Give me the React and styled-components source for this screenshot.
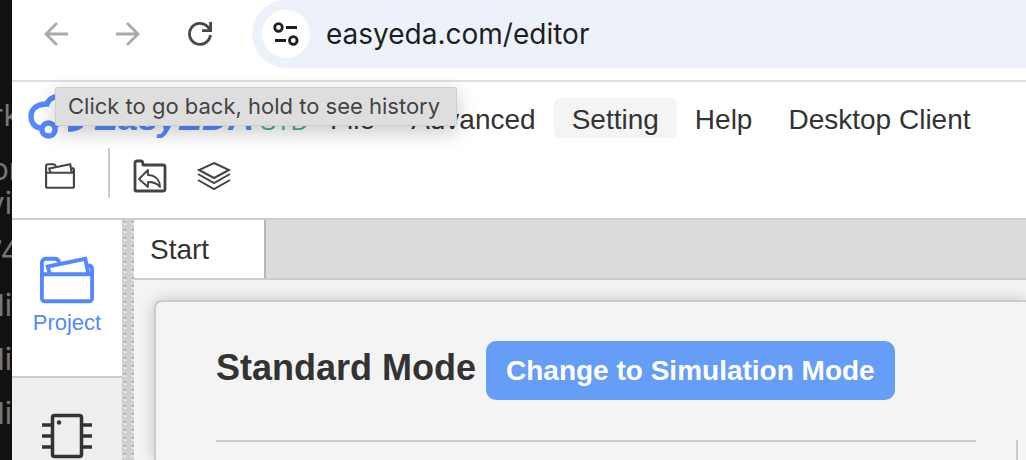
import styled, { createGlobalStyle } from "styled-components";

const menuItems = ["File", "Advanced", "Setting", "Help", "Desktop Client"];

const backdropLines = [
  { text: "rk", gap: 98, cut: true },
  { text: "or", gap: 20, cut: true },
  { text: "vi", gap: 0 },
  { text: "74", gap: 14, cut: true },
  { text: "di", gap: 20 },
  { text: "di", gap: 20 },
  { text: "di", gap: 20 },
];

export default function App() {
  return (
    <>
      <GlobalStyle />
      <Desktop>
        <Backdrop aria-hidden="true">
          {backdropLines.map((line, i) => (
            <BackdropLine key={i} $gap={line.gap} $cut={line.cut}>
              {line.text}
            </BackdropLine>
          ))}
        </Backdrop>

        <Browser>
          <NavBar>
            <NavButton aria-label="Back" $muted>
              <BackIcon />
            </NavButton>
            <NavButton aria-label="Forward" $muted>
              <ForwardIcon />
            </NavButton>
            <NavButton aria-label="Reload">
              <ReloadIcon />
            </NavButton>
            <AddressBar>
              <SiteInfo aria-label="View site information">
                <TuneIcon />
              </SiteInfo>
              <Address aria-label="Address" defaultValue="easyeda.com/editor" />
            </AddressBar>
            <Tooltip role="tooltip">Click to go back, hold to see history</Tooltip>
          </NavBar>

          <Header>
            <MenuRow>
              <Brand>
                <CloudLogo />
                <BrandText>
                  <BrandName>EasyEDA</BrandName>
                  <Edition>STD</Edition>
                </BrandText>
              </Brand>
              {menuItems.map((item) => (
                <MenuButton key={item} $active={item === "Setting"}>
                  {item}
                </MenuButton>
              ))}
            </MenuRow>
            <ToolRow>
              <ToolButton aria-label="Open project">
                <FolderIcon width={30} height={26} stroke={4} />
              </ToolButton>
              <Divider />
              <ToolButton aria-label="Recover files">
                <RecoverIcon />
              </ToolButton>
              <ToolButton aria-label="Layers">
                <LayersIcon />
              </ToolButton>
            </ToolRow>
          </Header>

          <Workspace>
            <Sidebar>
              <SideItem $active>
                <FolderIcon width={54} height={48} stroke={4} />
                Project
              </SideItem>
              <SideItem aria-label="Library">
                <ChipIcon />
              </SideItem>
            </Sidebar>
            <Splitter />
            <Editor>
              <TabBar>
                <Tab>Start</Tab>
              </TabBar>
              <Canvas>
                <Panel>
                  <ModeRow>
                    <ModeTitle>Standard Mode</ModeTitle>
                    <ModeButton>Change to Simulation Mode</ModeButton>
                  </ModeRow>
                  <Columns>
                    <MainColumn />
                    <AsideColumn />
                  </Columns>
                </Panel>
              </Canvas>
            </Editor>
          </Workspace>
        </Browser>
      </Desktop>
    </>
  );
}

function BackIcon() {
  return (
    <svg width="24" height="24" viewBox="0 0 24 24" fill="none" stroke="currentColor" strokeWidth="2.8">
      <path d="M24 12H2M13 1 2 12l11 11" />
    </svg>
  );
}

function ForwardIcon() {
  return (
    <svg width="24" height="24" viewBox="0 0 24 24" fill="none" stroke="currentColor" strokeWidth="2.8">
      <path d="M0 12h22M11 1l11 11-11 11" />
    </svg>
  );
}

function ReloadIcon() {
  return (
    <svg width="24" height="24" viewBox="0 0 24 24" fill="none" stroke="currentColor" strokeWidth="2.8">
      <path d="M22.4 13A10.5 10.5 0 1 1 19.5 4.5L22 7.5" />
      <path d="M22.6 0v8.6H14" />
    </svg>
  );
}

function TuneIcon() {
  return (
    <svg width="26" height="24" viewBox="0 0 26 24" fill="none" stroke="currentColor" strokeWidth="2.8">
      <circle cx="5.5" cy="5.5" r="3.8" />
      <path d="M13 5.5h11M2 18.5h11" />
      <circle cx="20.3" cy="18.5" r="3.8" />
    </svg>
  );
}

function CloudLogo() {
  return (
    <svg width="60" height="46" viewBox="0 0 60 46" fill="none" stroke="#5588ff" strokeWidth="5.5">
      <path d="M12 33C6 32 3 27 3 21c0-7 6-12 16-12C21 3 29 0 35 1c7 1 12 5 13 11 6 1 9 6 8 11-1 7-6 11-16 11" />
      <circle cx="20.5" cy="34.5" r="6.6" />
      <path d="M27 31l12-9" />
    </svg>
  );
}

function FolderIcon({ width, height, stroke }) {
  return (
    <svg
      width={width}
      height={height}
      viewBox="0 0 56 48"
      fill="none"
      stroke="currentColor"
      strokeWidth={stroke}
      strokeLinejoin="round">
      <path d="M2 18h52v25q0 3-3 3H5q-3 0-3-3z" />
      <path d="M2 20V6a4 4 0 0 1 4-4h9q4 0 5 4" />
      <path d="M10 17 8 10 47 2l3 15" strokeLinejoin="miter" />
      <path d="M50 9q4 0 4 4v7" />
    </svg>
  );
}

function RecoverIcon() {
  return (
    <svg width="34" height="34" viewBox="0 0 34 34" fill="none" stroke="currentColor" strokeLinejoin="round">
      <path d="M2 31V4q0-2 2-2h4q2 0 2 4h20q2 0 2 2v22q0 2-2 2H3q-1 0-1-1z" strokeWidth="2.8" />
      <path d="M6 20l9-9v5c7 0 12 5 12 12-3-4-7-5-12-5v5z" strokeWidth="1.8" />
    </svg>
  );
}

function LayersIcon() {
  return (
    <svg width="34" height="30" viewBox="0 0 34 30" fill="none" stroke="currentColor" strokeWidth="2">
      <path d="M17 2 32 9 17 17 2 9z" />
      <path d="M1 13l16 9 16-9M1 19l16 9 16-9" />
    </svg>
  );
}

function ChipIcon() {
  return (
    <svg width="50" height="46" viewBox="0 0 50 46" fill="none" stroke="currentColor" strokeWidth="3.5">
      <rect x="10.5" y="1.5" width="29" height="41" rx="2" />
      <path d="M0 11h10M0 22h10M0 33h10M40 11h10M40 22h10M40 33h10" />
      <circle cx="17" cy="8.5" r="2.2" fill="currentColor" stroke="none" />
    </svg>
  );
}

const GlobalStyle = createGlobalStyle`
  * {
    box-sizing: border-box;
  }

  body {
    margin: 0;
    overflow: hidden;
    font-family: "Liberation Sans", Arial, sans-serif;
    color: #333;
  }

  button,
  input {
    margin: 0;
    padding: 0;
    border: none;
    background: none;
    color: inherit;
    font: inherit;
  }

  svg {
    display: block;
    flex: none;
    overflow: visible;
  }
`;

const Desktop = styled.div`
  display: flex;
  height: 100vh;
  overflow: hidden;
  background: #111;
`;

const Backdrop = styled.div`
  display: flex;
  flex-direction: column;
  align-items: flex-end;
  flex: none;
  width: 12px;
  overflow: hidden;
  color: #777;
  font-family: Inter, sans-serif;
  font-size: 30px;
  line-height: 34px;
`;

const BackdropLine = styled.span`
  margin-top: ${({ $gap }) => $gap}px;
  margin-right: ${({ $cut }) => ($cut ? "-8px" : "0")};
`;

const Browser = styled.div`
  display: flex;
  flex-direction: column;
  flex: 1;
  min-width: 0;
  background: #fff;
`;

const NavBar = styled.div`
  position: relative;
  display: flex;
  flex: none;
  align-items: flex-start;
  padding-left: 8px;
  height: 82px;
  border-bottom: 2px solid #e0e0e0;
`;

const NavButton = styled.button`
  display: flex;
  align-items: center;
  justify-content: center;
  width: 72px;
  height: 68px;
  color: ${({ $muted }) => ($muted ? "#a9a9a9" : "#474747")};
`;

const AddressBar = styled.div`
  display: flex;
  flex: 1;
  align-items: center;
  gap: 16px;
  height: 68px;
  margin-left: 16px;
  padding-left: 10px;
  border-radius: 34px 0 0 34px;
  background: #edf2fa;
`;

const SiteInfo = styled.button`
  display: flex;
  flex: none;
  align-items: center;
  justify-content: center;
  width: 48px;
  height: 48px;
  border-radius: 50%;
  background: #fff;
  color: #1f1f1f;
`;

const Address = styled.input`
  flex: 1;
  min-width: 0;
  height: 40px;
  outline: none;
  color: #1f1f1f;
  font-family: Inter, sans-serif;
  font-size: 28px;
`;

const Tooltip = styled.div`
  position: absolute;
  z-index: 1;
  top: 87px;
  left: 43px;
  padding: 0 16px 0 12px;
  border: 1px solid #cfcfcf;
  border-radius: 2px;
  background: #dedede;
  box-shadow: 0 6px 20px rgba(0, 0, 0, 0.22);
  color: #444;
  font-family: Inter, sans-serif;
  font-size: 22px;
  line-height: 37px;
  white-space: nowrap;
`;

const Header = styled.header`
  display: flex;
  flex-direction: column;
  flex: none;
  padding-top: 10px;
  border-bottom: 2px solid #ccc;
`;

const MenuRow = styled.nav`
  display: flex;
  align-items: center;
  height: 52px;
  padding-left: 16px;
`;

const Brand = styled.div`
  display: flex;
  flex: none;
  align-items: center;
  gap: 6px;
  width: 284px;
`;

const BrandText = styled.div`
  display: flex;
  align-items: baseline;
  gap: 6px;
  padding-top: 3px;
  line-height: 40px;
`;

const BrandName = styled.span`
  color: #5588ff;
  font-size: 36px;
  font-style: italic;
  font-weight: bold;
`;

const Edition = styled.span`
  color: #4cb08a;
  font-size: 24px;
`;

const MenuButton = styled.button`
  flex: none;
  height: 40px;
  padding: 3px 18px 0;
  border-radius: 6px;
  background: ${({ $active }) => ($active ? "#f4f4f4" : "transparent")};
  font-size: 28px;
`;

const ToolRow = styled.div`
  display: flex;
  align-items: flex-start;
  height: 74px;
  padding: 4px 0 0 16px;
`;

const ToolButton = styled.button`
  display: flex;
  align-items: center;
  justify-content: center;
  width: 64px;
  height: 56px;
  color: #444;
`;

const Divider = styled.span`
  width: 2px;
  height: 50px;
  margin: 0 8px 0 16px;
  background: #ccc;
`;

const Workspace = styled.div`
  display: flex;
  flex: 1;
  min-height: 0;
`;

const Sidebar = styled.aside`
  flex: none;
  width: 110px;
  overflow: hidden;
  background: #eee;
`;

const SideItem = styled.button`
  display: flex;
  flex-direction: column;
  align-items: center;
  gap: 6px;
  width: 100%;
  height: 158px;
  padding-top: 36px;
  border-bottom: 2px solid #ccc;
  background: ${({ $active }) => ($active ? "#fff" : "transparent")};
  color: ${({ $active }) => ($active ? "#5588ff" : "#333")};
  font-size: 22px;
`;

const Splitter = styled.div`
  flex: none;
  width: 12px;
  background-color: #d0d0d0;
  background-image: radial-gradient(ellipse 2px 1px at 3px 2px, #b0b0b0 50%, transparent),
    radial-gradient(ellipse 2px 1px at 3px 4px, #f0f0f0 50%, transparent);
  background-size: 8px 8px;
`;

const Editor = styled.main`
  display: flex;
  flex-direction: column;
  flex: 1;
  min-width: 0;
`;

const TabBar = styled.div`
  display: flex;
  flex: none;
  height: 60px;
  border-bottom: 2px solid #ccc;
  background: #dcdcdc;
`;

const Tab = styled.button`
  width: 132px;
  padding: 2px 0 0 16px;
  border-right: 2px solid #b8b8b8;
  background: #fff;
  font-size: 28px;
  text-align: left;
`;

const Canvas = styled.div`
  display: flex;
  flex: 1;
  min-height: 0;
  padding: 20px 0 0 20px;
  overflow: hidden;
  background: #f4f4f4;
`;

const Panel = styled.section`
  display: flex;
  flex-direction: column;
  flex: 1;
  padding: 39px 0 0 60px;
  border: 2px solid #ccc;
  border-width: 2px 0 0 2px;
  border-radius: 8px 0 0 0;
  background: #f4f4f4;
  box-shadow: 0 0 16px rgba(0, 0, 0, 0.2);
`;

const ModeRow = styled.div`
  display: flex;
  align-items: center;
  gap: 10px;
`;

const ModeTitle = styled.h1`
  margin: 0;
  padding-bottom: 6px;
  font-size: 36px;
`;

const ModeButton = styled.button`
  height: 59px;
  padding: 0 20px;
  border-radius: 10px;
  background: #669df6;
  color: #fff;
  font-size: 28px;
  font-weight: bold;
`;

const Columns = styled.div`
  display: flex;
  flex: 1;
  gap: 40px;
  margin-top: 40px;
`;

const MainColumn = styled.div`
  flex: 1;
  border-top: 2px solid #ccc;
`;

const AsideColumn = styled.div`
  flex: none;
  width: 10px;
  border-left: 2px solid #ccc;
`;
